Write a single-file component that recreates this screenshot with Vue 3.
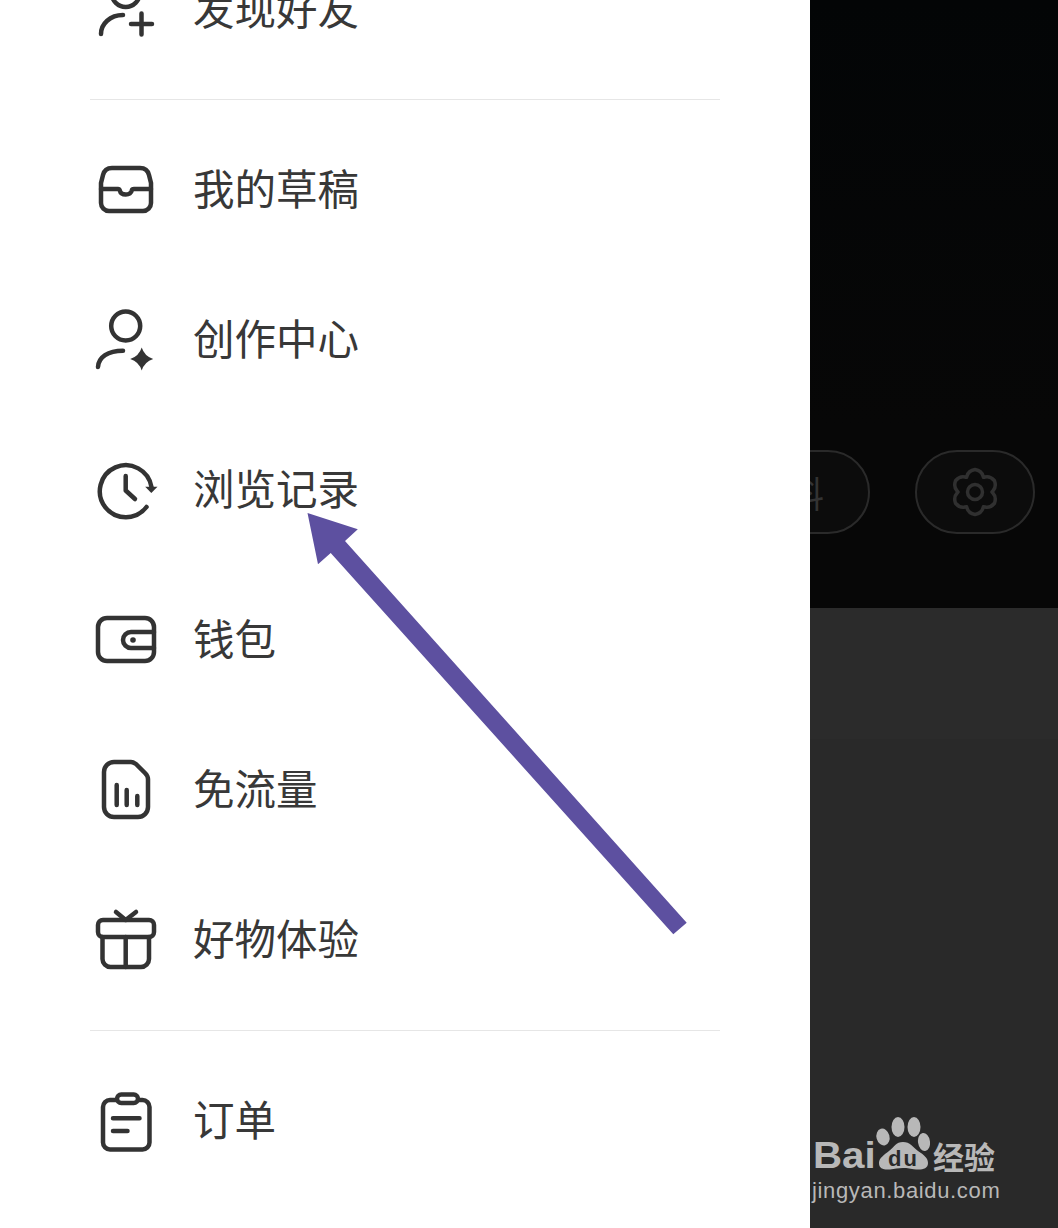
<script setup>
// six lobed gear outline, the one icon too fiddly to write by hand
function gearPath(cx, cy, outer, inner) {
  const pt = (deg, r) => {
    const a = (deg * Math.PI) / 180
    return `${(cx + r * Math.cos(a)).toFixed(2)} ${(cy + r * Math.sin(a)).toFixed(2)}`
  }
  let d = ''
  for (let i = 0; i < 6; i++) {
    const a = -90 + i * 60
    d += i === 0 ? `M${pt(a - 30, inner)}` : ''
    d += ` C${pt(a - 24, inner + 1)} ${pt(a - 22, outer)} ${pt(a, outer)}`
    d += ` C${pt(a + 22, outer)} ${pt(a + 24, inner + 1)} ${pt(a + 30, inner)}`
  }
  return `${d}Z`
}

const gear = gearPath(30, 30, 22.5, 17)
</script>

<template>
  <div class="screen">
    <aside class="drawer">
      <div class="menu-row first">
        <svg class="icon" viewBox="0 0 70 70">
          <circle cx="35.7" cy="19" r="14" />
          <path d="M11 60C11 50 20 41 33 41" />
          <path d="M41 50H62M51.5 39.5V60.5" />
        </svg>
        <span>发现好友</span>
      </div>
      <div class="rule" />

      <div class="menu-row">
        <svg class="icon" viewBox="0 0 70 70">
          <path d="M22 14H50C55 14 58 17 59 21L61 29V49A8 8 0 0 1 53 57H19A8 8 0 0 1 11 49V29L13 21C14 17 17 14 22 14Z" />
          <path d="M11 35H28C29 35 29.500 35.500 29.800 36.500C30.500 39.500 33 40.500 35.700 40.500C38.500 40.500 41 39.500 41.800 36.500C42 35.500 42.800 35 44 35H61" />
        </svg>
        <span>我的草稿</span>
      </div>
      <div class="menu-row">
        <svg class="icon" viewBox="0 0 70 70">
          <circle cx="35.7" cy="22" r="14.500" />
          <path d="M8 63C8.500 53 18 46.700 33 46.700" />
          <path class="solid" d="M51.700 43.500Q54.500 52.200 63.200 55Q54.500 57.800 51.700 66.500Q49 57.800 40.200 55Q49 52.200 51.700 43.500Z" />
        </svg>
        <span>创作中心</span>
      </div>
      <div class="menu-row">
        <svg class="icon" viewBox="0 0 70 70">
          <path d="M56.500 53A26 26 0 1 1 61.500 33" />
          <path class="solid" d="M55.200 32.700H67.500L61.300 39Z" />
          <path d="M35.700 22V36.500L45 45" />
        </svg>
        <span>浏览记录</span>
      </div>
      <div class="menu-row">
        <svg class="icon" viewBox="0 0 70 70">
          <rect x="8" y="14" width="56" height="43" rx="9" />
          <path d="M64 28H41A8 8 0 0 0 41 44H64" />
          <circle class="solid" cx="43" cy="36" r="2.800" />
        </svg>
        <span>钱包</span>
      </div>
      <div class="menu-row">
        <svg class="icon" viewBox="0 0 70 70">
          <path d="M24 8H41C43 8 44.500 9 46 10L55 19C57 21 58 22 58 25V53A10 10 0 0 1 48 63H24A10 10 0 0 1 14 53V18A10 10 0 0 1 24 8Z" />
          <path d="M26.700 31V51M36.700 36V51M47.300 42V51" />
        </svg>
        <span>免流量</span>
      </div>
      <div class="menu-row">
        <svg class="icon" viewBox="0 0 70 70">
          <rect x="8" y="16" width="56" height="17" rx="5" />
          <path d="M12.500 33V55A8 8 0 0 0 20.500 63H51A8 8 0 0 0 59 55V33" />
          <path d="M35.700 33V63" />
          <path d="M26 8L35.700 16L46 8" />
        </svg>
        <span>好物体验</span>
      </div>
      <div class="rule lower" />

      <div class="menu-row">
        <svg class="icon" viewBox="0 0 70 70">
          <rect x="13" y="15" width="46.500" height="49.500" rx="7" />
          <rect class="clip" x="27" y="9.500" width="21" height="8.500" rx="4.250" />
          <path d="M23 33.300H49.500M23 46H37.500" />
        </svg>
        <span>订单</span>
      </div>
    </aside>

    <main class="backdrop">
      <section class="profile">
        <div class="pill wide">编辑资料</div>
        <div class="pill">
          <svg class="gear" viewBox="0 0 60 60">
            <path :d="gear" />
            <circle cx="30" cy="30" r="7.500" />
          </svg>
        </div>
      </section>
      <section class="band" />
      <section class="feed" />
    </main>

    <svg class="arrow" viewBox="0 0 1058 1228">
      <polygon points="307.500,513 357.800,529.300 345,541 686.700,922.700 673.300,934.300 330.700,553 318,564.300" />
    </svg>

    <div class="watermark">
      <div class="mark-row">
        <span class="mark-bai">Bai</span>
        <svg class="paw" viewBox="0 0 58 62">
          <ellipse cx="11" cy="24" rx="6.500" ry="8.500" transform="rotate(-15 11 24)" />
          <ellipse cx="26" cy="14" rx="6.500" ry="10" />
          <ellipse cx="42" cy="14" rx="6.500" ry="10" />
          <ellipse cx="52" cy="29" rx="6" ry="9" transform="rotate(-8 52 29)" />
          <path d="M31 29C38 29 41 34 46 38C52 42 56 45 56 50C56 56 50 57 44 56.500C38 56 36 55 31 55C26 55 23 56 18 56.500C12 57 7 56 7 50C7 45 12 42 17 38C22 34 24 29 31 29Z" />
          <text x="31.500" y="53" class="paw-du">du</text>
        </svg>
        <span class="mark-cn">经验</span>
      </div>
      <div class="mark-url">jingyan.baidu.com</div>
    </div>
  </div>
</template>

<style scoped>
.screen {
  position: relative;
  display: flex;
  width: 1058px;
  height: 1228px;
  overflow: hidden;
  font-family: "Noto Sans CJK SC", "Liberation Sans", sans-serif;
}

.drawer {
  flex: 0 0 810px;
  box-sizing: border-box;
  padding: 0 90px;
  background: #fff;
  color: #383838;
}

.menu-row {
  display: flex;
  align-items: center;
  gap: 33px;
  height: 150px;
  font-size: 41.500px;
  line-height: 1;
}

.menu-row span {
  margin-top: -3px;
}

.menu-row.first {
  margin-top: -66px;
}

.icon {
  flex: 0 0 70px;
  width: 70px;
  height: 70px;
  fill: none;
  stroke: #333;
  stroke-width: 4.500;
  stroke-linecap: round;
  stroke-linejoin: round;
}

.icon .solid {
  fill: #333;
  stroke: none;
}

.icon .clip {
  fill: #fff;
}

.rule {
  height: 1px;
  margin: 15px 0 14px;
  background: #e6e6e6;
}

.rule.lower {
  margin: 16px 0 14px;
}

.backdrop {
  flex: 1;
  min-width: 0;
  display: flex;
  flex-direction: column;
  overflow: hidden;
}

.profile {
  flex: 0 0 608px;
  box-sizing: border-box;
  display: flex;
  justify-content: flex-end;
  align-items: flex-start;
  gap: 45px;
  padding: 450px 23px 0 0;
  background: linear-gradient(#030506, #070707 70%);
}

.pill {
  flex: 0 0 auto;
  box-sizing: border-box;
  width: 120px;
  height: 84px;
  display: flex;
  align-items: center;
  justify-content: center;
  border: 2px solid #2a2a2a;
  border-radius: 42px;
  background: #0c0c0c;
}

.pill.wide {
  width: 260px;
  justify-content: flex-end;
  padding-right: 44px;
  color: #333;
  font-size: 36px;
}

.gear {
  width: 60px;
  height: 60px;
  fill: none;
  stroke: #303030;
  stroke-width: 3.500;
}

.band {
  flex: 0 0 131px;
  background: #2b2b2b;
}

.feed {
  flex: 1;
  background: #292929;
}

.arrow {
  position: absolute;
  inset: 0;
  width: 1058px;
  height: 1228px;
  fill: #5d50a0;
  pointer-events: none;
}

.watermark {
  position: absolute;
  left: 812px;
  top: 1113px;
  color: #b8b8b8;
}

.mark-row {
  display: flex;
  align-items: flex-end;
  height: 62px;
}

.mark-bai {
  margin-left: 1px;
  width: 59px;
  font-family: "Liberation Sans", sans-serif;
  font-size: 36px;
  font-weight: 700;
  line-height: 1;
  margin-bottom: 1px;
  transform: scaleX(1.12);
  transform-origin: left center;
}

.paw {
  flex: 0 0 58px;
  width: 58px;
  height: 62px;
  fill: #b8b8b8;
}

.paw-du {
  fill: #2a2a2a;
  font-family: "Liberation Sans", sans-serif;
  font-size: 22px;
  font-weight: 700;
  letter-spacing: 2px;
  text-anchor: middle;
}

.mark-cn {
  font-size: 31px;
  font-weight: 700;
  line-height: 1;
  margin-left: 3px;
  margin-bottom: 4px;
}

.mark-url {
  font-family: "Liberation Sans", sans-serif;
  font-size: 22px;
  letter-spacing: 0.650px;
  line-height: 1;
  margin-top: 5px;
}
</style>
